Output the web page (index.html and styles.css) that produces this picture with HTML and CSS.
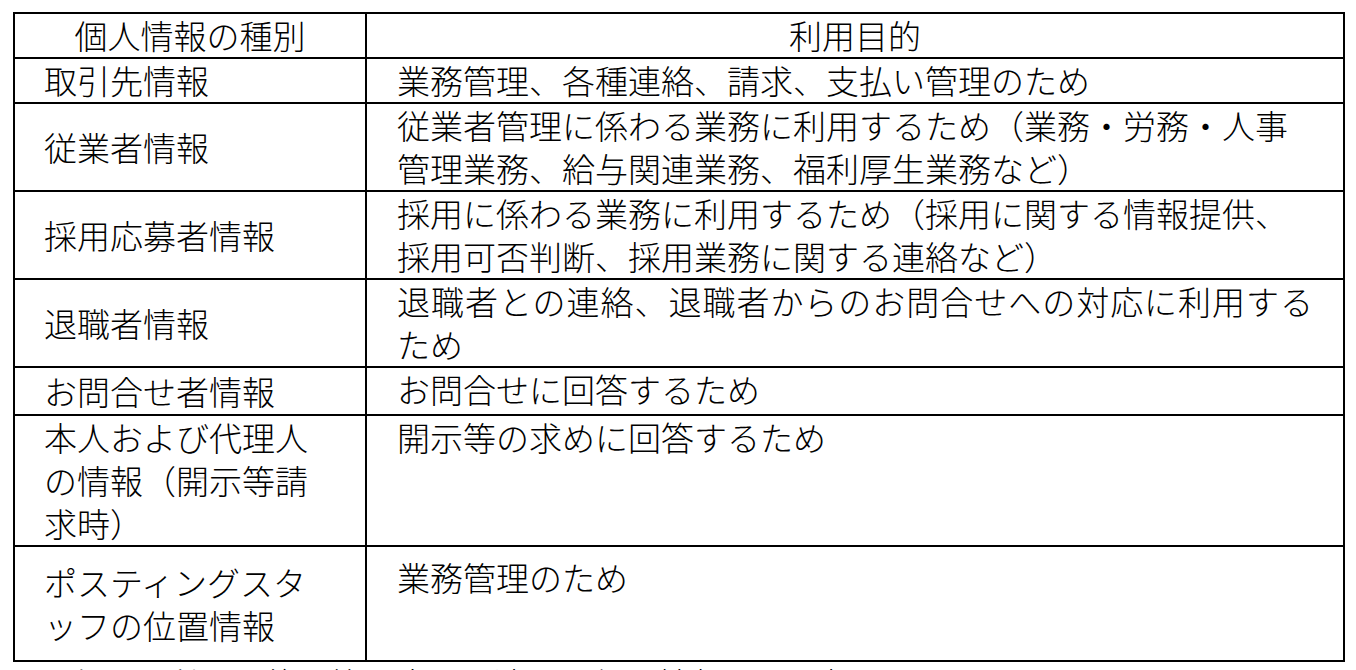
FILE: index.html
```html
<!DOCTYPE html>
<html lang="ja">
<head>
<meta charset="utf-8">
<title>個人情報の利用目的</title>
<link rel="stylesheet" href="styles.css">
</head>
<body>
<table class="purpose">
  <colgroup>
    <col class="col-kind">
    <col class="col-use">
  </colgroup>
  <thead>
    <tr class="head">
      <th>個人情報の種別</th>
      <th>利用目的</th>
    </tr>
  </thead>
  <tbody>
    <tr>
      <td class="kind">取引先情報</td>
      <td class="use">業務管理、各種連絡、請求、支払い管理のため</td>
    </tr>
    <tr>
      <td class="kind">従業者情報</td>
      <td class="use">従業者管理に係わる業務に利用するため（業務・労務・人事管理業務、給与関連業務、福利厚生業務など）</td>
    </tr>
    <tr>
      <td class="kind">採用応募者情報</td>
      <td class="use">採用に係わる業務に利用するため（採用に関する情報提供、採用可否判断、採用業務に関する連絡など）</td>
    </tr>
    <tr>
      <td class="kind">退職者情報</td>
      <td class="use"><span class="spread">退職者との連絡、退職者からのお問合せへの対応に利用する</span><span class="tail">ため</span></td>
    </tr>
    <tr class="short">
      <td class="kind">お問合せ者情報</td>
      <td class="use">お問合せに回答するため</td>
    </tr>
    <tr>
      <td class="kind">本人および代理人の情報（開示等請求時）</td>
      <td class="use">開示等の求めに回答するため</td>
    </tr>
    <tr class="last">
      <td class="kind">ポスティングスタッフの位置情報</td>
      <td class="use">業務管理のため</td>
    </tr>
  </tbody>
</table>
<p class="note">※上記の利用目的の範囲内で、適切に個人情報を取り扱います。</p>
</body>
</html>
```
FILE: styles.css
```css
html, body {
  margin: 0;
  padding: 0;
  background: #ffffff;
}

body {
  font-family: "Noto Sans CJK JP", "Noto Sans", sans-serif;
  font-weight: 300;
  font-size: 33px;
  color: #000000;
  padding: 12px 0 0 13px;
  height: 670px;
  overflow: hidden;
  box-sizing: border-box;
}

.purpose {
  border-collapse: collapse;
  width: 1332px;
  table-layout: fixed;
}

.col-kind {
  width: 352px;
}

.purpose th,
.purpose td {
  border: 2px solid #000000;
  line-height: 43px;
  padding: 0;
  font-weight: 300;
}

.purpose th {
  text-align: center;
  vertical-align: middle;
}

.kind {
  vertical-align: middle;
  padding: 0 44px 0 29px !important;
  text-align: left;
}

.use {
  vertical-align: top;
  padding: 0 30px 0 30px !important;
  text-align: left;
}

.spread {
  display: block;
  text-align: justify;
  text-align-last: justify;
}

.tail {
  display: block;
}

.short td {
  height: 46px;
}

.last td {
  height: 104px;
}

.last .use {
  padding-top: 9px !important;
}

.note {
  margin: 0;
  padding-left: 20px;
  line-height: 43px;
}
```
